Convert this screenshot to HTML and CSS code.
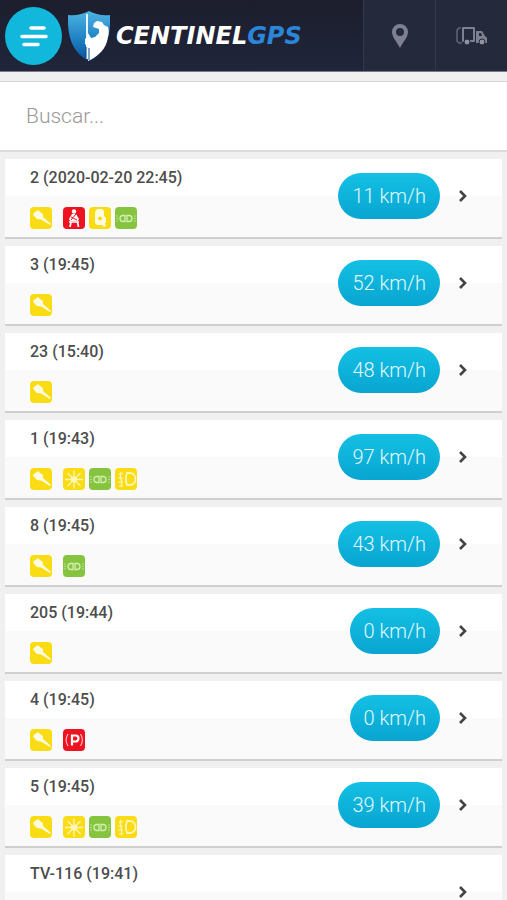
FILE: index.html
```html
<!DOCTYPE html>
<html lang="es">

<head>
    <meta charset="UTF-8">
    <meta name="viewport" content="width=device-width, initial-scale=1.0">
    <title>Centinel GPS</title>
    <link rel="stylesheet" href="styles.css">
</head>

<body>

    <!-- status icons, reused in every row -->
    <svg class="sprite" aria-hidden="true">
        <symbol id="key" viewBox="0 0 22 22">
            <path d="M3 7 L5 5 L7 4 L8 3 L10 5 L13 7 L13 10 L21 17 L20 18 L11 12.500 L7 12 L4 9Z" fill="#fffbe0" />
        </symbol>
        <symbol id="belt" viewBox="0 0 22 22">
            <circle cx="11" cy="4.500" r="2.200" fill="#fff" />
            <path d="M9 7h4l3 5-1 2H7l-1-2z" fill="#fff" />
            <path d="M6 15h10M8 15l-1 5M14.500 15l1 5" stroke="#fff" stroke-width="1.700" fill="none" />
            <path d="M13 7l-5 6M8 10l6 3" stroke="#ee1320" stroke-width="1" />
        </symbol>
        <symbol id="door" viewBox="0 0 22 22">
            <path d="M8 2h5l2 2v5l2 2v4l-1 1 1 3-2 1-2-2H8l-2-2V5z" fill="#fffbe0" />
            <circle cx="11" cy="11.500" r="2" fill="#fadc14" />
        </symbol>
        <symbol id="lights" viewBox="0 0 22 22">
            <path d="M10 8.500H8a3 3 0 0 0 0 6h2zM12 8.500h2a3 3 0 0 1 0 6h-2z" fill="none" stroke="#d3f0b3" stroke-width="1.300" />
            <path d="M1 9h2M1 11.500h2M1 14h2M19 9h2M19 11.500h2M19 14h2" stroke="#b5e088" />
        </symbol>
        <symbol id="sun" viewBox="0 0 22 22">
            <circle cx="11" cy="11.500" r="3" fill="#fffbe0" />
            <path d="M11 2.500v18M2 11.500h18M4.500 5l13 13M17.500 5l-13 13" stroke="#fff6b5" stroke-width="1.300" />
        </symbol>
        <symbol id="beam" viewBox="0 0 22 22">
            <path d="M12 5h2.500c8 0 8 12 0 12H12c-1.500-4-1.500-8 0-12z" fill="none" stroke="#fff6b5" stroke-width="1.800" />
            <path d="M4 6h4M3 10h5M3 14h5M4 18h4M6 4c-3 5 3 9 0 15" fill="none" stroke="#fff6b5" stroke-width="1.200" />
        </symbol>
        <symbol id="parking" viewBox="0 0 22 22">
            <path d="M9 16.500V6.500h3.500a3 3 0 0 1 0 6H9" fill="none" stroke="#fff" stroke-width="2.200" />
            <path d="M5 5c-2.500 4-2.500 8 0 12M17.500 5c2.500 4 2.500 8 0 12" fill="none" stroke="#ffb9bd" stroke-width="1.200" />
        </symbol>
        <symbol id="arrow" viewBox="0 0 10 14">
            <path d="M2 2l5 5-5 5" fill="none" stroke="#444" stroke-width="2.600" />
        </symbol>
    </svg>

    <header class="header">
        <button type="button" class="menu" aria-label="Menu">
            <svg width="30" height="22" viewBox="0 0 30 22">
                <path d="M12 3h13M3 11.500h24M5 19.500h14" stroke="#fff" stroke-width="3.500" stroke-linecap="round" />
            </svg>
        </button>
        <a href="#" class="brand">
            <svg width="42" height="50" viewBox="0 0 42 50">
                <defs>
                    <linearGradient id="shield" x1="0" y1="0" x2="0" y2="1">
                        <stop offset="0" stop-color="#4db4e2" />
                        <stop offset="0.500" stop-color="#2387c8" />
                        <stop offset="1" stop-color="#07539b" />
                    </linearGradient>
                </defs>
                <path d="M0 4c8 1 15-1 21-4 6 3 13 5 21 4 1 23-5 38-21 46C5 42-1 27 0 4z" fill="url(#shield)" />
                <path d="M19 48V3" stroke="#e9f6ff" stroke-width="2" />
                <path d="M25 16l1-4 3-2 5 1 2 3 4 2c1 3 1 7 0 10-1 6-3 11-7 15-4 4-8 7-13 9V36l-3-3v-5l3-2v-4l3 5 4-1 4-4v-4z" fill="#fff" />
                <path d="M18 36v12M21 37v12" stroke="#0a4a8c" stroke-width="1" />
            </svg>
            <span class="brand-name">CENTINEL<span>GPS</span></span>
        </a>
        <nav class="tabs">
            <a href="#" aria-label="Mapa">
                <svg width="16" height="24" viewBox="0 0 16 24">
                    <path fill-rule="evenodd" d="M8 0a8 8 0 0 1 8 8c0 5-5 10-8 16C5 18 0 13 0 8a8 8 0 0 1 8-8zM8 4a4 4 0 1 0 0 8 4 4 0 0 0 0-8z" fill="#7e8091" />
                </svg>
            </a>
            <a href="#" aria-label="Vehículos">
                <svg width="32" height="20" viewBox="0 0 32 20">
                    <path d="M5 2H3L1 4v11l2 2h3" fill="none" stroke="#63657a" stroke-width="1.500" />
                    <path d="M7 2h11v13H7z" fill="none" stroke="#7e8091" stroke-width="2" stroke-linejoin="round" />
                    <path fill-rule="evenodd" d="M20 5h6l3 5 2 2v5H20zM23 7v3h3l-1-3z" fill="#7e8091" />
                    <circle cx="11" cy="16" r="3" fill="#8f91a0" stroke="#24283b" />
                    <circle cx="26" cy="16" r="3" fill="#8f91a0" stroke="#24283b" />
                </svg>
            </a>
        </nav>
    </header>

    <div class="search">
        <input type="search" placeholder="Buscar..." aria-label="Buscar">
    </div>

    <main class="list">
        <div class="row">
            <div class="info">
                <h2>2 (2020-02-20 22:45)</h2>
                <div class="icons">
                    <svg class="yellow"><use href="#key" /></svg>
                    <svg class="red"><use href="#belt" /></svg>
                    <svg class="yellow"><use href="#door" /></svg>
                    <svg class="green"><use href="#lights" /></svg>
                </div>
            </div>
            <button type="button" class="speed">11 km/h</button>
            <a href="#" class="more" aria-label="Ver"><svg><use href="#arrow" /></svg></a>
        </div>

        <div class="row">
            <div class="info">
                <h2>3 (19:45)</h2>
                <div class="icons">
                    <svg class="yellow"><use href="#key" /></svg>
                </div>
            </div>
            <button type="button" class="speed">52 km/h</button>
            <a href="#" class="more" aria-label="Ver"><svg><use href="#arrow" /></svg></a>
        </div>

        <div class="row">
            <div class="info">
                <h2>23 (15:40)</h2>
                <div class="icons">
                    <svg class="yellow"><use href="#key" /></svg>
                </div>
            </div>
            <button type="button" class="speed">48 km/h</button>
            <a href="#" class="more" aria-label="Ver"><svg><use href="#arrow" /></svg></a>
        </div>

        <div class="row">
            <div class="info">
                <h2>1 (19:43)</h2>
                <div class="icons">
                    <svg class="yellow"><use href="#key" /></svg>
                    <svg class="yellow"><use href="#sun" /></svg>
                    <svg class="green"><use href="#lights" /></svg>
                    <svg class="yellow"><use href="#beam" /></svg>
                </div>
            </div>
            <button type="button" class="speed">97 km/h</button>
            <a href="#" class="more" aria-label="Ver"><svg><use href="#arrow" /></svg></a>
        </div>

        <div class="row">
            <div class="info">
                <h2>8 (19:45)</h2>
                <div class="icons">
                    <svg class="yellow"><use href="#key" /></svg>
                    <svg class="green"><use href="#lights" /></svg>
                </div>
            </div>
            <button type="button" class="speed">43 km/h</button>
            <a href="#" class="more" aria-label="Ver"><svg><use href="#arrow" /></svg></a>
        </div>

        <div class="row">
            <div class="info">
                <h2>205 (19:44)</h2>
                <div class="icons">
                    <svg class="yellow"><use href="#key" /></svg>
                </div>
            </div>
            <button type="button" class="speed">0 km/h</button>
            <a href="#" class="more" aria-label="Ver"><svg><use href="#arrow" /></svg></a>
        </div>

        <div class="row">
            <div class="info">
                <h2>4 (19:45)</h2>
                <div class="icons">
                    <svg class="yellow"><use href="#key" /></svg>
                    <svg class="red"><use href="#parking" /></svg>
                </div>
            </div>
            <button type="button" class="speed">0 km/h</button>
            <a href="#" class="more" aria-label="Ver"><svg><use href="#arrow" /></svg></a>
        </div>

        <div class="row">
            <div class="info">
                <h2>5 (19:45)</h2>
                <div class="icons">
                    <svg class="yellow"><use href="#key" /></svg>
                    <svg class="yellow"><use href="#sun" /></svg>
                    <svg class="green"><use href="#lights" /></svg>
                    <svg class="yellow"><use href="#beam" /></svg>
                </div>
            </div>
            <button type="button" class="speed">39 km/h</button>
            <a href="#" class="more" aria-label="Ver"><svg><use href="#arrow" /></svg></a>
        </div>

        <div class="row">
            <div class="info">
                <h2>TV-116 (19:41)</h2>
                <div class="icons"></div>
            </div>
            <a href="#" class="more" aria-label="Ver"><svg><use href="#arrow" /></svg></a>
        </div>
    </main>

</body>

</html>
```
FILE: styles.css
```css
* {
    box-sizing: border-box;
}

body {
    margin: 0;
    height: 100vh;
    overflow: hidden;
    font-family: Roboto, "Liberation Sans", sans-serif;
    background: #f0f0f0;
    color: #4d4d4d;
}

.sprite {
    display: none;
}

/* header */

.header {
    display: flex;
    align-items: center;
    height: 72px;
    padding-left: 5px;
    background: linear-gradient(#1c1e2c, #20253b);
    border-bottom: 1px solid #777984;
}

.menu {
    display: flex;
    align-items: center;
    justify-content: center;
    width: 57px;
    height: 58px;
    padding: 0;
    border: none;
    border-radius: 50%;
    background: #12b8db;
    cursor: pointer;
}

.brand {
    display: flex;
    align-items: center;
    gap: 6px;
    margin-left: 6px;
    text-decoration: none;
}

.brand-name {
    font-family: "DejaVu Sans", sans-serif;
    font-size: 24px;
    font-weight: bold;
    font-style: italic;
    line-height: 24px;
    color: #fff;
}

.brand-name span {
    color: #2b86d9;
}

.tabs {
    display: flex;
    align-self: stretch;
    margin-left: auto;
}

.tabs a {
    display: flex;
    align-items: center;
    justify-content: center;
    width: 72px;
    background: #25293c;
    border-left: 1px solid #35384b;
}

/* search box */

.search {
    margin-top: 9px;
    background: #fff;
    border-top: 1px solid #d8d8d8;
    border-bottom: 2px solid #dcdcdc;
}

.search input {
    display: block;
    width: 100%;
    height: 68px;
    padding: 0 26px;
    border: none;
    outline: none;
    background: none;
    font-family: inherit;
    font-size: 21px;
    font-weight: 300;
}

.search input::placeholder {
    color: #999;
}

/* vehicle list */

.list {
    display: flex;
    flex-direction: column;
    gap: 7px;
    padding: 7px 5px;
}

.row {
    display: flex;
    align-items: center;
    height: 80px;
    padding: 0 34px 0 25px;
    background: linear-gradient(#fff 48%, #fafafa 48%);
    border-bottom: 2px solid #cfcfcf;
}

.info {
    flex: 1;
    padding-top: 1px;
}

.info h2 {
    margin: 0 0 19px;
    font-size: 16px;
    font-weight: 500;
    line-height: 20px;
}

.icons {
    display: flex;
    gap: 4px;
    height: 22px;
}

.icons svg {
    width: 22px;
    height: 22px;
    border-radius: 4px;
}

.icons svg:first-child {
    margin-right: 7px;
}

.yellow {
    background: #fadc14;
}

.red {
    background: #ee1320;
}

.green {
    background: #86c440;
}

.speed,
.more {
    margin-bottom: 4px;
}

.speed {
    height: 46px;
    padding: 0 14px;
    border: none;
    border-radius: 23px;
    background: linear-gradient(#14c0e4, #08a5d0);
    color: #e2f8fd;
    font-family: inherit;
    font-size: 20px;
    font-weight: 300;
    cursor: pointer;
}

.more {
    margin-left: 18px;
    line-height: 0;
}

.more svg {
    width: 10px;
    height: 14px;
}
```
